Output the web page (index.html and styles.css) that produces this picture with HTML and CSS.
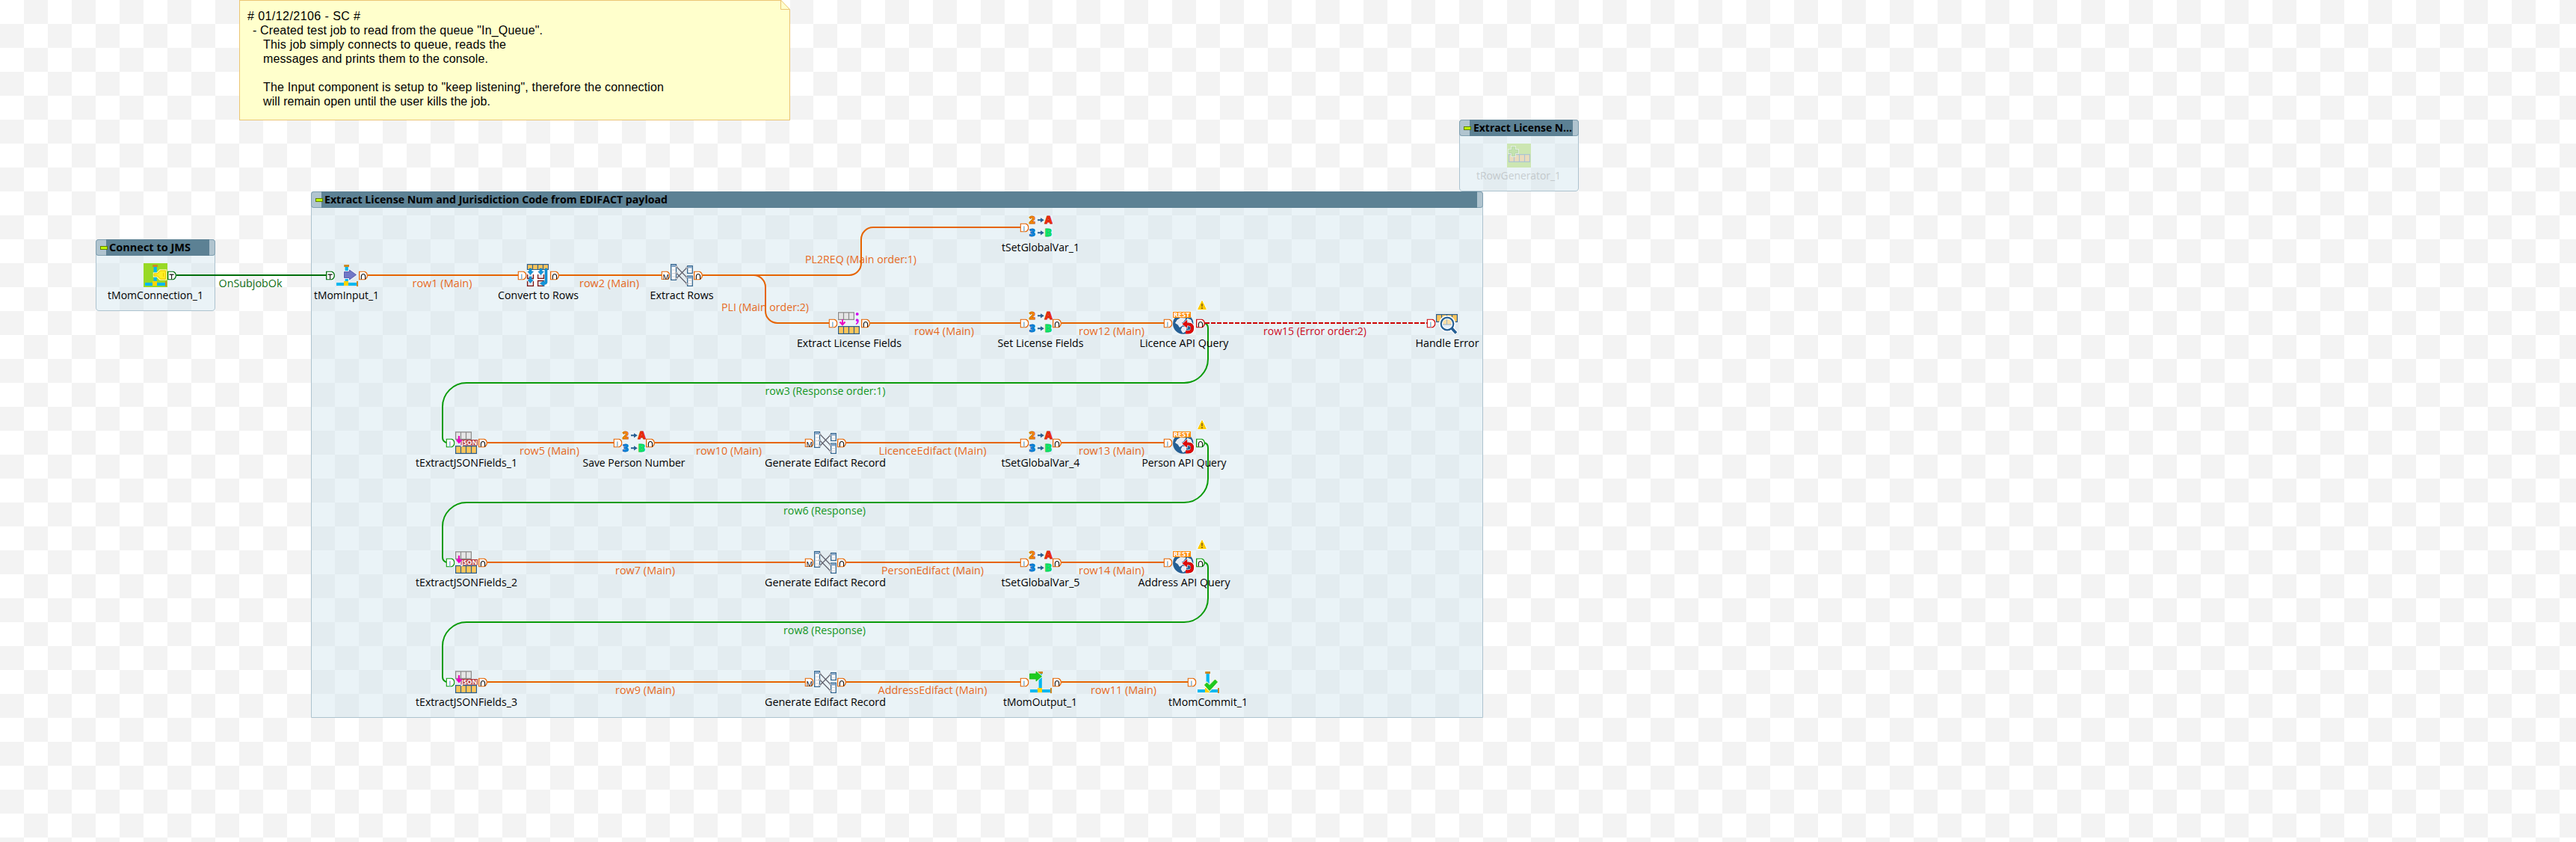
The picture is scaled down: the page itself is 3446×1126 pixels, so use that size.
FILE: index.html
```
<!DOCTYPE html>
<html lang="en">
<head>
<meta charset="utf-8">
<title>Job designer</title>
<link rel="stylesheet" href="styles.css">
</head>
<body>
<main class="canvas">

<section class="subjob subjob-connect">
  <header class="subjob-head"><span class="cap cap-left"><i class="fold"></i></span><svg class="bar" height="22"><text x="4" y="16" textLength="109" lengthAdjust="spacingAndGlyphs">Connect to JMS</text></svg><span class="cap cap-right"></span></header>
</section>
<section class="subjob subjob-extract">
  <header class="subjob-head"><span class="cap cap-left"><i class="fold"></i></span><svg class="bar" height="22"><text x="4" y="16" textLength="459" lengthAdjust="spacingAndGlyphs">Extract License Num and Jurisdiction Code from EDIFACT payload</text></svg><span class="cap cap-right"></span></header>
</section>
<section class="subjob subjob-generator">
  <header class="subjob-head"><span class="cap cap-left"><i class="fold"></i></span><svg class="bar" height="22"><text x="5" y="16" textLength="132" lengthAdjust="spacingAndGlyphs">Extract License N...</text></svg><span class="cap cap-right"></span></header>
</section>

<aside class="note">
<svg class="note-fold" width="13" height="13" viewBox="0 0 13 13"><path d="M0 0H13V13Z" fill="#fff"/><path d="M.5 0V12.5H12.5Z" fill="#ffffcc" stroke="#ebc574"/></svg>
<svg class="note-text" width="720" height="150">
  <text x="10" y="27" textLength="151"># 01/12/2106 - SC #</text>
  <text x="17" y="46" textLength="388">- Created test job to read from the queue "In_Queue".</text>
  <text x="31" y="65" textLength="325">This job simply connects to queue, reads the</text>
  <text x="31" y="84" textLength="301">messages and prints them to the console.</text>
  <text x="31" y="122" textLength="536">The Input component is setup to "keep listening", therefore the connection</text>
  <text x="31" y="141" textLength="304">will remain open until the user kills the job.</text>
</svg>
</aside>

<svg class="diagram" width="3446" height="1126" viewBox="0 0 3446 1126">
<defs>
  <symbol id="port" viewBox="0 0 12 12" width="12" height="12"><path d="M.7 .7H7.5Q11.3 2.2 11.3 6T7.5 11.3H.7Z" fill="#fff" stroke="currentColor" stroke-width="1.3"/></symbol>
  <symbol id="pO" viewBox="0 0 12 12" width="12" height="12"><use href="#port"/><path d="M3.4 11V7Q3.5 4 6 4T8.6 7V11" fill="none" stroke="#111" stroke-width="1.1"/></symbol>
  <symbol id="pI" viewBox="0 0 12 12" width="12" height="12"><use href="#port"/><path d="M5.1 4V11" stroke="#7ebdea" stroke-width="1.2"/><path d="M6 4V11" stroke="#c9b9a2" stroke-width=".7"/></symbol>
  <symbol id="pM" viewBox="0 0 12 11.4" width="12" height="11.4"><use href="#port"/><text x="2" y="11.5" class="port-letter">M</text></symbol>
  <symbol id="pT" viewBox="0 0 12 12" width="12" height="12"><use href="#port"/><path d="M2.6 4.6H8.6M5.6 4.6V11" fill="none" stroke="#111" stroke-width="1.1"/></symbol>

  <symbol id="mom" viewBox="0 0 32 32" width="32" height="32">
    <path d="M13.6 5H17.8V25H13.6Z" fill="#00b8f0"/><path d="M12.2 2H19V5H12.2Z" fill="#cc8822"/>
    <path d="M2 26H29V30H2Z" fill="#00b8f0"/><path d="M12 24H18V30H12Z" fill="#ffd400"/><path d="M29 24H31V31H29Z" fill="#cc8822"/>
  </symbol>
  <symbol id="connection" viewBox="0 0 32 32" width="32" height="32"><path d="M0 0H32V32H0Z" fill="#98d925"/><use href="#mom"/>
    <path d="M14 13.5H18L22 9.5H30V21.5H22L18 17.5H14Z" fill="#ffee22" stroke="#fff6a8" stroke-width="2.4" paint-order="stroke"/><path d="M14 14H18.5L22.5 10H29.5V21H22.5L18.5 17H14ZM26.5 13V18" fill="none" stroke="#ecc800"/></symbol>
  <symbol id="input" viewBox="0 0 32 32" width="32" height="32"><use href="#mom"/><path d="M12.5 11.5H19.5V9L28.5 15.5L19.5 22V19.5H12.5Z" fill="#7177c6" stroke="#eef0fa" stroke-width="3" paint-order="stroke"/><path d="M12.5 11.5H19.5V9L28.5 15.5L19.5 22V19.5H12.5Z" fill="none" stroke="#5a60ae"/></symbol>
  <symbol id="output" viewBox="0 0 32 32" width="32" height="32"><use href="#mom"/><path d="M1.5 5H10V2L17.5 8.5L10 15V12H1.5Z" fill="#1dcb1d" stroke="#e6f6e6" stroke-width="2.4" paint-order="stroke"/><path d="M1.5 5H10V2L17.5 8.5L10 15V12H1.5Z" fill="none" stroke="#18b618" stroke-width=".8"/></symbol>
  <symbol id="commit" viewBox="0 0 32 32" width="32" height="32"><use href="#mom"/><path d="M11.5 20L14.5 17L18 20.5L25.5 13L28.5 16L18 27.5Z" fill="#1dcb1d" stroke="#f2f8d8" stroke-width="2.6" paint-order="stroke"/><path d="M11.5 20L14.5 17L18 20.5L25.5 13L28.5 16L18 27.5Z" fill="none" stroke="#17b517" stroke-width=".8"/></symbol>

  <symbol id="convert" viewBox="0 0 32 32" width="32" height="32"><path d="M1 1H31V31H1Z" fill="#fff"/>
    <path d="M1.5 1.7H29.5V8.5H1.5ZM8.5 1.7V8.5M15.5 1.7V8.5M22.5 1.7V8.5" fill="#fdc65a" stroke="#2c5f8f" stroke-width="1.2"/>
    <path d="M1.6 15V20.3H9.5V15M1.6 24V30.3H9.5V24M15.6 15V20.3H23.5V15M15.6 30.3V23.5H23.5V30.3Z" fill="#e4e8ee" stroke="#7a1111" stroke-width="1.3"/>
    <path d="M4 7H7V11H9.5L5.5 15.5L1.8 11H4ZM4 18H7V22H9.5L5.5 26.5L1.8 22H4ZM18 7H21V11H23.5L19.5 15.5L15.8 11H18ZM25 7H28V26Q27.5 28.5 24 28.5V31L18.5 27L24 23V25.5H25Z" fill="#1296dc" stroke="#0c76b4" stroke-width=".6"/></symbol>

  <symbol id="map" viewBox="0 0 32 32" width="32" height="32">
    <path d="M1.7 1.7H8.5V22.3H1.7ZM23.7 3.7H30.3V13.3H23.7ZM23.7 17.2H30.3V30.3H23.7Z" fill="#fff" stroke="#34668f" stroke-width="1.3"/>
    <path d="M2.3 2.3H8V5H2.3ZM24.3 4.3H29.8V6.5H24.3ZM24.3 17.8H29.8V20.4H24.3Z" fill="#7fa3c7"/>
    <path d="M2.5 9H8M2.5 13.5H8M2.5 18H8M24.5 10H29.8M24.5 23.5H29.8M24.5 27H29.8" stroke="#ccd0d4"/>
    <path d="M8.7 4.5L22.8 19M8.7 13L22.8 27.5M8.7 20.5L22.8 6" stroke="#5c5c68" stroke-width="1.1"/>
    <g fill="#fff" stroke="#8c8c94" stroke-width=".9"><circle cx="8.7" cy="4.5" r="1.1"/><circle cx="8.7" cy="13" r="1.1"/><circle cx="8.7" cy="20.5" r="1.1"/><circle cx="22.8" cy="6" r="1.1"/><circle cx="22.8" cy="19" r="1.1"/><circle cx="22.8" cy="27.5" r="1.1"/></g></symbol>

  <symbol id="setvar" viewBox="0 0 32 32" width="32" height="32">
    <g class="glyphs"><text x=".7" y="11.3" fill="#ff8c0a" stroke="#c96500">2</text><text x="21.5" y="11.3" fill="#fb2d0c" stroke="#c92206">A</text><text x=".7" y="28.3" fill="#0a8ae6" stroke="#0568b8">3</text><text x="21.5" y="28.3" fill="#0df06a" stroke="#08c455">B</text></g>
    <path d="M12 5.3H16V3.2L20.8 6.3L16 9.4V7.3H12ZM12 22.3H16V20.2L20.8 23.3L16 26.4V24.3H12Z" fill="#265f93"/></symbol>

  <symbol id="tables" viewBox="0 0 32 32" width="32" height="32">
    <path d="M1.6 1.8H22.4V11.3H1.6ZM8.5 1.8V11.3M15.5 1.8V11.3" fill="#e6e6e6" stroke="#8b8b8b" stroke-width="1.2"/>
    <path d="M1.6 20.7H29.4V30.3H1.6ZM8.5 20.7V30.3M15.5 20.7V30.3M22.5 20.7V30.3" fill="#fdc65a" stroke="#2c5f8f" stroke-width="1.2"/></symbol>
  <symbol id="delimited" viewBox="0 0 32 32" width="32" height="32"><use href="#tables"/>
    <path d="M7 11V18M3.5 14.5L7 18.3L10.5 14.5" fill="none" stroke="#ec00c0" stroke-width="2"/>
    <circle cx="26.7" cy="4" r="2" fill="#d40af0"/><path d="M24.7 12Q24.7 10.3 26.7 10.3T28.8 12.8Q28.8 17 25 18.2V16.6Q26.6 15.8 26.7 14Q24.7 14 24.7 12Z" fill="#d40af0"/></symbol>
  <symbol id="json" viewBox="0 0 32 32" width="32" height="32"><use href="#tables"/>
    <path d="M8.5 12H31V19.6H8.5Z" fill="#b33a3e"/><text x="9" y="18.9" class="badge" textLength="21.5" lengthAdjust="spacingAndGlyphs">JSON</text>
    <path d="M6 7V15M2.8 12L6 15.7L9.2 12" fill="none" stroke="#ec00c0" stroke-width="2.2"/></symbol>

  <symbol id="rest" viewBox="0 0 32 32" width="32" height="32">
    <circle cx="14.7" cy="17" r="13.7" fill="#255f94"/>
    <path d="M7 12L11 9.5L18 10L15 14L12.5 15.5L14 19L10 21.5L8 18L4.5 16ZM14 21L19 22L18 27L14.5 29L12 25ZM20 10L25 12L26.5 16L22 15Z" fill="#e6edf5" stroke="#fff" stroke-width=".8"/>
    <path d="M1 1H25V9H1Z" fill="#ff8a08"/><text x="1.7" y="8.1" class="badge" textLength="22" lengthAdjust="spacingAndGlyphs">REST</text>
    <path d="M18 28.3H21.5Q27.5 28.3 27.5 22.8T21.5 17.5H18.5" fill="none" stroke="#fff" stroke-width="5.5"/><path d="M13.5 17.3L20 11.8V22.8Z" fill="#dc0a0a" stroke="#fff" stroke-width="1.2" paint-order="stroke"/>
    <path d="M18 28.3H21.5Q27 28.3 27 22.8T21.5 17.5H18.5" fill="none" stroke="#a00" stroke-width="4.2"/><path d="M18 28.3H21.5Q27 28.3 27 22.8T21.5 17.5H18" fill="none" stroke="#e20a0a" stroke-width="3.2"/></symbol>

  <symbol id="log" viewBox="0 0 32 32" width="32" height="32">
    <path d="M1.6 4.7H29.4V14.3H1.6ZM8.5 4.7V14.3M15.5 4.7V14.3M22.5 4.7V14.3" fill="#fdc65a" stroke="#2c5f8f" stroke-width="1.2"/>
    <path d="M22 23L28.5 30" stroke="#fff" stroke-width="6"/><circle cx="16" cy="17" r="8.5" fill="#e6eff6" stroke="#fff" stroke-width="5"/>
    <path d="M10.5 18V13.5Q16 8 21.5 13.5V18Z" fill="#fbdfa8"/><path d="M15.5 11V18M10 18H22" stroke="#9bb5cd"/>
    <circle cx="16" cy="17" r="8.3" fill="none" stroke="#255f94" stroke-width="2.2"/><path d="M22 23L28 29.5" stroke="#255f94" stroke-width="3.6"/></symbol>

  <symbol id="rowgen" viewBox="0 0 32 32" width="32" height="32"><path d="M0 0H32V32H0Z" fill="#98d925"/>
    <path d="M2.6 14.7H30.4V24.3H2.6ZM9.5 14.7V24.3M16.5 14.7V24.3M23.5 14.7V24.3" fill="#fdb64a" stroke="#2c6f8f" stroke-width="1.2"/>
    <path d="M6.5 4.5H10.5V8.5H14.5V12.5H10.5V16.5H6.5V12.5H2.5V8.5H6.5Z" fill="#7ccf18" stroke="#dff2b8" stroke-width="3" paint-order="stroke"/><path d="M6.5 4.5H10.5V8.5H14.5V12.5H10.5V16.5H6.5V12.5H2.5V8.5H6.5Z" fill="none" stroke="#5db014"/></symbol>

  <symbol id="warn" viewBox="0 0 14 14" width="14" height="14"><path d="M7 1.5L12.3 12.5H1.7Z" fill="#ffcc00" stroke="#fff" stroke-width="2.5" stroke-linejoin="round" paint-order="stroke"/><path d="M7 1.5L12.3 12.5H1.7Z" fill="#ffcc00" stroke="#ffcc00" stroke-linejoin="round"/><path d="M7 5V9M7 10V12" stroke="#8f6a10" stroke-width="1.8"/></symbol>
</defs>

<g class="wires">
  <path class="trigger" d="M236 368H437"/>
  <g class="main">
    <path d="M492 368H693M748 368H885M940 368H1136A16 16 0 0 0 1152 352V320A16 16 0 0 1 1168 304H1365"/>
    <path d="M1008 368A16 16 0 0 1 1024 384V416A16 16 0 0 0 1040 432H1109"/>
    <path d="M1164 432H1365M1420 432H1557"/>
    <path d="M652 592H821M876 592H1077M1132 592H1365M1420 592H1557"/>
    <path d="M652 752H1077M1132 752H1365M1420 752H1557"/>
    <path d="M652 912H1077M1132 912H1365M1420 912H1589"/>
  </g>
  <g class="response">
    <path d="M1611 432Q1616 433 1616 439V480A32 32 0 0 1 1584 512H624A32 32 0 0 0 592 544V585Q592 590 597 592"/>
    <path d="M1611 592Q1616 593 1616 599V640A32 32 0 0 1 1584 672H624A32 32 0 0 0 592 704V745Q592 750 597 752"/>
    <path d="M1611 752Q1616 753 1616 759V800A32 32 0 0 1 1584 832H624A32 32 0 0 0 592 864V905Q592 910 597 912"/>
  </g>
  <path class="error" d="M1612 432H1909"/>
</g>

<g class="icons">
  <use href="#connection" x="192" y="352"/><use href="#input" x="448" y="352"/><use href="#convert" x="704" y="352"/><use href="#map" x="896" y="352"/>
  <use href="#setvar" x="1376" y="288"/>
  <use href="#delimited" x="1120" y="416"/><use href="#setvar" x="1376" y="416"/><use href="#rest" x="1568" y="416"/><use href="#log" x="1920" y="416"/>
  <use href="#json" x="608" y="576"/><use href="#setvar" x="832" y="576"/><use href="#map" x="1088" y="576"/><use href="#setvar" x="1376" y="576"/><use href="#rest" x="1568" y="576"/>
  <use href="#json" x="608" y="736"/><use href="#map" x="1088" y="736"/><use href="#setvar" x="1376" y="736"/><use href="#rest" x="1568" y="736"/>
  <use href="#json" x="608" y="896"/><use href="#map" x="1088" y="896"/><use href="#output" x="1376" y="896"/><use href="#commit" x="1600" y="896"/>
  <use href="#warn" x="1601" y="401"/><use href="#warn" x="1601" y="561"/><use href="#warn" x="1601" y="721"/>
</g>

<g class="ports port-trigger"><use href="#pT" x="224" y="362.5"/><use href="#pT" x="436" y="362.5"/></g>
<g class="ports port-main">
  <use href="#pO" x="480" y="362.5"/><use href="#pI" x="692.5" y="362.5"/><use href="#pO" x="736" y="362.5"/><use href="#pM" x="884.5" y="362.5"/><use href="#pO" x="928" y="362.5"/>
  <use href="#pI" x="1364.5" y="298.5"/>
  <use href="#pI" x="1108.5" y="426.5"/><use href="#pO" x="1152" y="426.5"/><use href="#pI" x="1364.5" y="426.5"/><use href="#pO" x="1408" y="426.5"/><use href="#pI" x="1556.5" y="426.5"/>
  <use href="#pO" x="640" y="586.5"/><use href="#pI" x="820.5" y="586.5"/><use href="#pO" x="864" y="586.5"/><use href="#pM" x="1076.5" y="586.5"/><use href="#pO" x="1120" y="586.5"/><use href="#pI" x="1364.5" y="586.5"/><use href="#pO" x="1408" y="586.5"/><use href="#pI" x="1556.5" y="586.5"/>
  <use href="#pO" x="640" y="746.5"/><use href="#pM" x="1076.5" y="746.5"/><use href="#pO" x="1120" y="746.5"/><use href="#pI" x="1364.5" y="746.5"/><use href="#pO" x="1408" y="746.5"/><use href="#pI" x="1556.5" y="746.5"/>
  <use href="#pO" x="640" y="906.5"/><use href="#pM" x="1076.5" y="906.5"/><use href="#pO" x="1120" y="906.5"/><use href="#pI" x="1364.5" y="906.5"/><use href="#pO" x="1408" y="906.5"/><use href="#pI" x="1588.5" y="906.5"/>
</g>
<g class="ports port-response"><use href="#pI" x="596.5" y="586.5"/><use href="#pI" x="596.5" y="746.5"/><use href="#pI" x="596.5" y="906.5"/><use href="#pO" x="1600" y="586.5"/><use href="#pO" x="1600" y="746.5"/></g>
<g class="ports port-error"><use href="#pO" x="1600" y="426.5"/><use href="#pI" x="1908.5" y="426.5"/></g>

<g class="labels names">
  <text x="208" y="400" textLength="128" lengthAdjust="spacingAndGlyphs">tMomConnection_1</text>
  <text x="463.5" y="400" textLength="87" lengthAdjust="spacingAndGlyphs">tMomInput_1</text>
  <text x="720" y="400" textLength="108" lengthAdjust="spacingAndGlyphs">Convert to Rows</text>
  <text x="912" y="400" textLength="85" lengthAdjust="spacingAndGlyphs">Extract Rows</text>
  <text x="1392" y="336" textLength="104" lengthAdjust="spacingAndGlyphs">tSetGlobalVar_1</text>
  <text x="1136" y="464" textLength="140" lengthAdjust="spacingAndGlyphs">Extract License Fields</text>
  <text x="1392" y="464" textLength="115" lengthAdjust="spacingAndGlyphs">Set License Fields</text>
  <text x="1584" y="464" textLength="119" lengthAdjust="spacingAndGlyphs">Licence API Query</text>
  <text x="1936" y="464" textLength="85" lengthAdjust="spacingAndGlyphs">Handle Error</text>
  <text x="624" y="624" textLength="136" lengthAdjust="spacingAndGlyphs">tExtractJSONFields_1</text>
  <text x="848" y="624" textLength="137" lengthAdjust="spacingAndGlyphs">Save Person Number</text>
  <text x="1104" y="624" textLength="162" lengthAdjust="spacingAndGlyphs">Generate Edifact Record</text>
  <text x="1392" y="624" textLength="105" lengthAdjust="spacingAndGlyphs">tSetGlobalVar_4</text>
  <text x="1584" y="624" textLength="113" lengthAdjust="spacingAndGlyphs">Person API Query</text>
  <text x="624" y="784" textLength="136" lengthAdjust="spacingAndGlyphs">tExtractJSONFields_2</text>
  <text x="1104" y="784" textLength="162" lengthAdjust="spacingAndGlyphs">Generate Edifact Record</text>
  <text x="1392" y="784" textLength="105" lengthAdjust="spacingAndGlyphs">tSetGlobalVar_5</text>
  <text x="1584" y="784" textLength="123" lengthAdjust="spacingAndGlyphs">Address API Query</text>
  <text x="624" y="944" textLength="136" lengthAdjust="spacingAndGlyphs">tExtractJSONFields_3</text>
  <text x="1104" y="944" textLength="162" lengthAdjust="spacingAndGlyphs">Generate Edifact Record</text>
  <text x="1391.5" y="944" textLength="99" lengthAdjust="spacingAndGlyphs">tMomOutput_1</text>
  <text x="1616" y="944" textLength="106" lengthAdjust="spacingAndGlyphs">tMomCommit_1</text>
</g>
<g class="labels label-main">
  <text x="591.5" y="384" textLength="80" lengthAdjust="spacingAndGlyphs">row1 (Main)</text>
  <text x="815" y="384" textLength="80" lengthAdjust="spacingAndGlyphs">row2 (Main)</text>
  <text x="1151.5" y="352" textLength="149" lengthAdjust="spacingAndGlyphs">PL2REQ (Main order:1)</text>
  <text x="1023.5" y="416" textLength="117" lengthAdjust="spacingAndGlyphs">PLI (Main order:2)</text>
  <text x="1263" y="448" textLength="80" lengthAdjust="spacingAndGlyphs">row4 (Main)</text>
  <text x="1487" y="448" textLength="88" lengthAdjust="spacingAndGlyphs">row12 (Main)</text>
  <text x="735" y="608" textLength="80" lengthAdjust="spacingAndGlyphs">row5 (Main)</text>
  <text x="975" y="608" textLength="88" lengthAdjust="spacingAndGlyphs">row10 (Main)</text>
  <text x="1247.5" y="608" textLength="144" lengthAdjust="spacingAndGlyphs">LicenceEdifact (Main)</text>
  <text x="1487" y="608" textLength="88" lengthAdjust="spacingAndGlyphs">row13 (Main)</text>
  <text x="863" y="768" textLength="80" lengthAdjust="spacingAndGlyphs">row7 (Main)</text>
  <text x="1247.5" y="768" textLength="137" lengthAdjust="spacingAndGlyphs">PersonEdifact (Main)</text>
  <text x="1487" y="768" textLength="88" lengthAdjust="spacingAndGlyphs">row14 (Main)</text>
  <text x="863" y="928" textLength="80" lengthAdjust="spacingAndGlyphs">row9 (Main)</text>
  <text x="1247.5" y="928" textLength="146" lengthAdjust="spacingAndGlyphs">AddressEdifact (Main)</text>
  <text x="1503" y="928" textLength="88" lengthAdjust="spacingAndGlyphs">row11 (Main)</text>
</g>
<g class="labels label-trigger"><text x="335" y="384" textLength="85" lengthAdjust="spacingAndGlyphs">OnSubjobOk</text></g>
<g class="labels label-response">
  <text x="1104" y="528" textLength="161" lengthAdjust="spacingAndGlyphs">row3 (Response order:1)</text>
  <text x="1103" y="688" textLength="110" lengthAdjust="spacingAndGlyphs">row6 (Response)</text>
  <text x="1103" y="848" textLength="110" lengthAdjust="spacingAndGlyphs">row8 (Response)</text>
</g>
<g class="labels label-error"><text x="1759" y="448" textLength="138" lengthAdjust="spacingAndGlyphs">row15 (Error order:2)</text></g>

<g class="disabled"><use href="#rowgen" x="2016" y="192"/><g class="labels"><text x="2031.5" y="240" textLength="113" lengthAdjust="spacingAndGlyphs">tRowGenerator_1</text></g></g>
</svg>
</main>
</body>
</html>
```
FILE: styles.css
```
body {
  margin: 0;
}

.canvas {
  position: relative;
  width: 3446px;
  height: 1126px;
  overflow: hidden;
  background: #fff repeating-conic-gradient(#fff 0 25%, #f3f3f3 0 50%) 0 0 / 64px 64px;
  background-position: 32px 0;
  font-family: "Open Sans", "Noto Sans", sans-serif;
}

.subjob {
  position: absolute;
  box-sizing: border-box;
  border: 1px solid #adc3cf;
  border-radius: 4px;
  background: rgba(203, 225, 235, 0.4);
}

.subjob-connect { left: 128px; top: 320px; width: 160px; height: 96px; }
.subjob-extract { left: 416px; top: 256px; width: 1568px; height: 704px; border-radius: 4px 4px 0 0; }
.subjob-generator { left: 1952px; top: 160px; width: 160px; height: 96px; }

.subjob-head {
  display: flex;
  height: 22px;
  margin: -1px;
}

.cap {
  box-sizing: border-box;
  border: 1px solid #7f9fb0;
  background: #b0c4cf;
}

.cap-left {
  display: flex;
  align-items: center;
  justify-content: flex-end;
  width: 14px;
  border-right: 0;
  border-radius: 4px 0 0 4px;
}

.cap-right {
  width: 8px;
  border-left: 0;
  border-radius: 0 4px 4px 0;
}

.fold {
  flex: none;
  box-sizing: border-box;
  width: 10px;
  height: 5px;
  margin-right: -2px;
  border: 1px solid #5f7a00;
  background: #bfff00;
  z-index: 1;
}

.bar {
  flex: 1;
  min-width: 0;
  background: #5c8194;
  font-size: 15px;
  font-weight: 700;
}

.note {
  position: absolute;
  left: 320px;
  top: 0;
  box-sizing: border-box;
  width: 737px;
  height: 161px;
  border: 1px solid #ebc574;
  background: #ffffcc;
  font-family: "Liberation Sans", Arial, sans-serif;
  font-size: 16px;
}

.note-fold {
  position: absolute;
  top: -1px;
  right: -1px;
}

.note-text {
  display: block;
  margin-top: -1px;
}

.diagram {
  position: absolute;
  inset: 0;
}

.wires path {
  fill: none;
  stroke-width: 2;
}

.trigger { stroke: #006e0a; }
.main path { stroke: #e66400; }
.response path { stroke: #0a9b0a; }
.error { stroke: #cd0000; stroke-dasharray: 6 2; }

.port-trigger { color: #006e0a; }
.port-main { color: #e66400; }
.port-response { color: #0a9b0a; }
.port-error { color: #cd0000; }

.port-letter {
  font-size: 9.5px;
  fill: #111;
}

.badge {
  font-size: 8.5px;
  font-weight: 700;
  fill: #fff;
}

.glyphs {
  font-size: 14px;
  font-weight: 800;
  stroke-width: 0.8px;
}

.labels {
  font-size: 15px;
  text-anchor: middle;
}

.label-main { fill: #e66a1e; }
.label-trigger { fill: #0f6e14; }
.label-response { fill: #14961e; }
.label-error { fill: #cd0a1e; }

.disabled {
  opacity: 0.3;
}

.disabled .labels {
  fill: #777;
}
```
